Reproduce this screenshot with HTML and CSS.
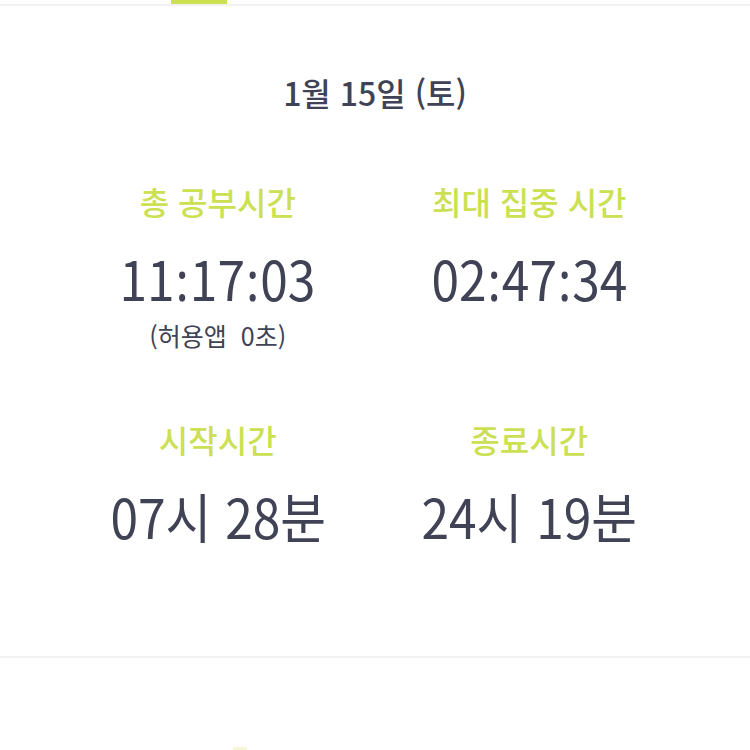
FILE: index.html
```html
<!DOCTYPE html>
<html lang="ko">
<head>
    <meta charset="UTF-8">
    <meta name="viewport" content="width=device-width, initial-scale=1.0">
    <title>공부 기록</title>
    <link rel="stylesheet" href="styles.css">
</head>
<body>
    <div class="tab-bar">
        <div class="tab-indicator"></div>
    </div>

    <h1 class="date">1월 15일 (토)</h1>

    <div class="stats">
        <div class="stat">
            <div class="stat-label">총 공부시간</div>
            <div class="stat-value">11<span class="colon">:</span>17<span class="colon">:</span>03</div>
            <div class="stat-sub">(허용앱&nbsp; 0초)</div>
        </div>
        <div class="stat">
            <div class="stat-label">최대 집중 시간</div>
            <div class="stat-value">02<span class="colon">:</span>47<span class="colon">:</span>34</div>
        </div>
        <div class="stat">
            <div class="stat-label">시작시간</div>
            <div class="stat-value">07시 28분</div>
        </div>
        <div class="stat">
            <div class="stat-label">종료시간</div>
            <div class="stat-value">24시 19분</div>
        </div>
    </div>

    <div class="next-section">
        <div class="next-mark"></div>
    </div>
</body>
</html>
```

FILE: styles.css
```css
body {
    margin: 0;
    background-color: #ffffff;
    font-family: "Noto Sans CJK KR", "Noto Sans", sans-serif;
    color: #404255;
    overflow: hidden;
}
.tab-bar {
    height: 4px;
    border-bottom: 2px solid #f1f1f4;
}
.tab-indicator {
    margin-left: 171px;
    width: 56px;
    height: 4px;
    background-color: #cde150;
}
.date {
    margin: 66px 0 0;
    font-size: 32px;
    font-weight: 500;
    line-height: 40px;
    text-align: center;
}
.stats {
    display: grid;
    grid-template-columns: 1fr 1fr;
    row-gap: 71px;
    margin-top: 71px;
    padding: 0 65px 110px 62px;
    border-bottom: 2px solid #f1f1f4;
}
.stat {
    display: flex;
    flex-direction: column;
    align-items: center;
}
.stat-label {
    font-size: 32px;
    font-weight: 500;
    line-height: 36px;
    color: #cbe052;
}
.stat-value {
    margin-top: 29px;
    font-size: 54px;
    line-height: 60px;
    color: #404255;
    transform: scaleX(0.92);
}
.colon {
    font-family: "Noto Sans", sans-serif;
    line-height: 0;
    padding: 0 1px;
}
.stat-sub {
    margin-top: 12px;
    font-size: 25px;
    line-height: 30px;
    color: #404255;
}
.next-section {
    padding-top: 89px;
}
.next-mark {
    margin-left: 233px;
    width: 14px;
    height: 4px;
    background-color: #f3f7d8;
}
```
